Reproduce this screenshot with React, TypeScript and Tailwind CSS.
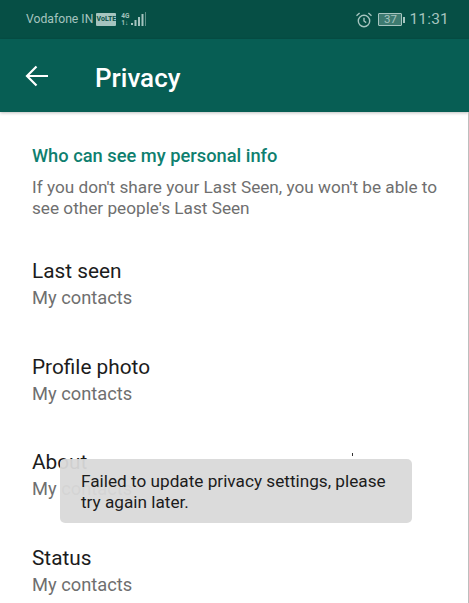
const font = { fontFamily: 'Roboto, sans-serif' };

function Row({ title, sub }: { title: string; sub: string }) {
  return (
    <div className="h-[95.5px] pt-[12px]">
      <div className="text-[20.8px] leading-[28px] text-[#1c1c1c]">{title}</div>
      <div className="text-[18.3px] leading-[24px] mt-[1px] text-[#6f6f6f]">{sub}</div>
    </div>
  );
}

export default function App() {
  return (
    <div style={font} className="relative w-[469px] h-[603px] overflow-hidden bg-white">
      <div className="h-[39px] bg-[#064f45] flex items-center pl-[26px] pr-[20px] text-[#a5c4bf]">
        <span className="text-[12.2px] leading-none">Vodafone IN</span>
        <span className="ml-[3px] w-[20px] h-[13px] rounded-[1px] bg-[#a5c4bf] text-[#064f45] text-[7px] font-bold leading-[13px] text-center">VoLTE</span>
        <span className="ml-[5px] flex flex-col w-[9px] text-[6.5px] leading-[7px] font-bold">
          <span>4G</span>
          <span>1↓</span>
        </span>
        <svg width="18" height="16" viewBox="0 0 18 16" className="ml-[1px]">
          <rect x="0" y="11" width="2" height="2" fill="#a5c4bf" />
          <rect x="3.5" y="8" width="2" height="6" fill="#a5c4bf" />
          <rect x="7" y="5" width="2" height="9" fill="#a5c4bf" />
          <rect x="10.5" y="2" width="2" height="12" fill="#a5c4bf" />
          <rect x="14" y="0" width="1" height="14" fill="#5e8f87" />
        </svg>
        <div className="ml-auto flex items-center">
          <svg width="18" height="18" viewBox="0 0 18 18" fill="none" stroke="#a5c4bf" strokeWidth="1.4">
            <circle cx="9" cy="10" r="5.7" />
            <path d="M9 6.8V10l2.2 1.6M1.5 4.8 4.6 2M16.5 4.8 13.4 2" />
          </svg>
          <div className="ml-[5px] w-[24px] h-[13px] border border-[#a5c4bf] bg-[#3d7a70] rounded-[1px] text-[11.5px] leading-[11px] text-center">37</div>
          <div className="ml-[1px] w-[2px] h-[6px] bg-[#a5c4bf]" />
          <span className="ml-[4px] text-[15.5px] leading-none tracking-[0.2px]">11:31</span>
        </div>
      </div>
      <div className="h-[73px] bg-[#075e54] flex items-center pl-[25px] shadow-[0_1px_3px_rgba(0,0,0,0.25)]">
        <svg width="24" height="24" viewBox="0 0 24 24" fill="none" stroke="#ffffff" strokeWidth="2.2">
          <path d="M23 12H2.5M11.5 2.5 2 12l9.5 9.5" />
        </svg>
        <span className="ml-[46px] mt-[5px] text-[26px] font-medium leading-none text-white">Privacy</span>
      </div>
      <div className="relative px-[32px] pt-[34px] border-r border-[#bdbdbd] h-[491px]">
        <div className="text-[18.3px] leading-[20px] font-medium text-[#0f7f6f]">Who can see my personal info</div>
        <div className="mt-[11px] w-[412px] text-[17.2px] leading-[21px] text-[#6f6f6f]">
          If you don't share your Last Seen, you won't be able to see other people's Last Seen
        </div>
        <div className="mt-[26px]">
          <Row title="Last seen" sub="My contacts" />
          <Row title="Profile photo" sub="My contacts" />
          <Row title="About" sub="My contacts" />
          <Row title="Status" sub="My contacts" />
        </div>
      </div>
      <div className="absolute left-[352px] top-[453px] w-[1px] h-[3px] bg-[#333333]" />
      <div className="absolute left-[60px] top-[459px] w-[352px] h-[64px] rounded-[5px] bg-[#d9d9d9]/95 px-[21px] pt-[12px] text-[17.2px] leading-[21px] text-[#1c1c1c]">
        Failed to update privacy settings, please try again later.
      </div>
    </div>
  );
}
